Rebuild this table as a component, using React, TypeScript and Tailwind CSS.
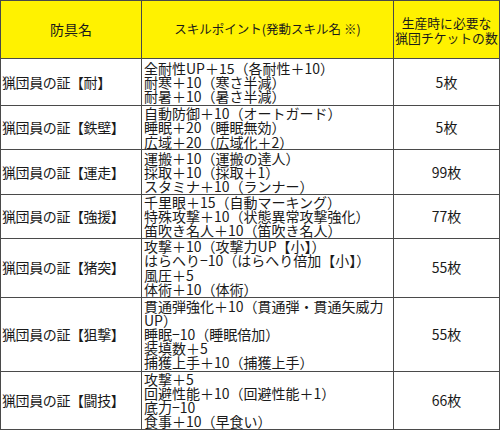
const rows = [
  {
    name: "猟団員の証【耐】",
    skills: ["全耐性UP＋15（各耐性＋10）", "耐寒＋10（寒さ半減）", "耐暑＋10（暑さ半減）"],
    count: "5枚",
    h: "h-[47px]",
  },
  {
    name: "猟団員の証【鉄壁】",
    skills: ["自動防御＋10（オートガード）", "睡眠＋20（睡眠無効）", "広域＋20（広域化＋2）"],
    count: "5枚",
    h: "h-[44px]",
  },
  {
    name: "猟団員の証【運走】",
    skills: ["運搬＋10（運搬の達人）", "採取＋10（採取＋1）", "スタミナ＋10（ランナー）"],
    count: "99枚",
    h: "h-[45px]",
  },
  {
    name: "猟団員の証【強援】",
    skills: ["千里眼＋15（自動マーキング）", "特殊攻撃＋10（状態異常攻撃強化）", "笛吹き名人＋10（笛吹き名人）"],
    count: "77枚",
    h: "h-[43px]",
  },
  {
    name: "猟団員の証【猪突】",
    skills: ["攻撃＋10（攻撃力UP【小】）", "はらへり−10（はらへり倍加【小】）", "風圧＋5", "体術＋10（体術）"],
    count: "55枚",
    h: "h-[59px]",
  },
  {
    name: "猟団員の証【狙撃】",
    skills: ["貫通弾強化＋10（貫通弾・貫通矢威力", "UP）", "睡眠−10（睡眠倍加）", "装填数＋5", "捕獲上手＋10（捕獲上手）"],
    count: "55枚",
    h: "h-[74px]",
  },
  {
    name: "猟団員の証【闘技】",
    skills: ["攻撃＋5", "回避性能＋10（回避性能＋1）", "底力−10", "食事＋10（早食い）"],
    count: "66枚",
    h: "h-[58px]",
  },
];

export default function App() {
  return (
    <div className="w-[500px] h-[430px] bg-white overflow-hidden [font-family:'Noto_Sans_CJK_JP',sans-serif] text-[#1a1a1a]">
      <table className="border-collapse table-fixed w-[499px]">
        <colgroup>
          <col className="w-[141px]" />
          <col className="w-[252px]" />
          <col className="w-[106px]" />
        </colgroup>
        <thead>
          <tr className="h-[58px] bg-[#fff200]">
            <th className="border border-[#4a4a4a] p-0 font-normal text-[14px] text-center">防具名</th>
            <th className="border border-[#4a4a4a] p-0 font-normal text-[12.5px] text-center whitespace-nowrap">
              スキルポイント(発動スキル名 ※)
            </th>
            <th className="border border-[#4a4a4a] p-0 font-normal text-[12.8px] leading-[15px] text-center whitespace-nowrap">
              生産時に必要な
              <br />
              猟団チケットの数
            </th>
          </tr>
        </thead>
        <tbody>
          {rows.map((r) => (
            <tr key={r.name} className={r.h}>
              <td className="border border-[#4a4a4a] p-0 pl-[1px] text-[14px] tracking-[-0.4px] whitespace-nowrap align-middle">{r.name}</td>
              <td className="border border-[#4a4a4a] p-0 pl-[2px] text-[14px] leading-[14.2px] whitespace-nowrap align-middle">
                {r.skills.map((s, i) => (
                  <div key={i}>{s}</div>
                ))}
              </td>
              <td className="border border-[#4a4a4a] p-0 text-[14px] text-center align-middle">{r.count}</td>
            </tr>
          ))}
        </tbody>
      </table>
    </div>
  );
}
